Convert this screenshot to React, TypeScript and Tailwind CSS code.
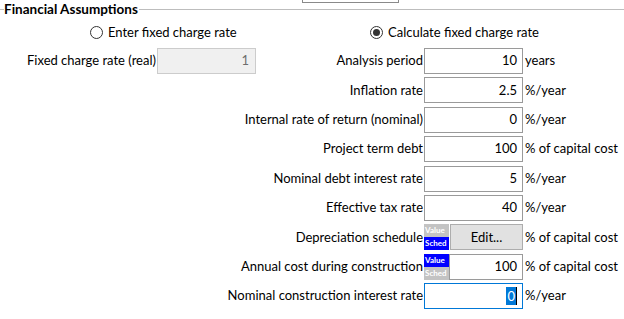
import React from 'react';

type Row = {
  label: string;
  value?: string;
  unit: string;
  kind?: 'input' | 'edit' | 'sched' | 'focus';
};

const ROWS: Row[] = [
  { label: 'Analysis period', value: '10', unit: 'years' },
  { label: 'Inflation rate', value: '2.5', unit: '%/year' },
  { label: 'Internal rate of return (nominal)', value: '0', unit: '%/year' },
  { label: 'Project term debt', value: '100', unit: '% of capital cost' },
  { label: 'Nominal debt interest rate', value: '5', unit: '%/year' },
  { label: 'Effective tax rate', value: '40', unit: '%/year' },
  { label: 'Depreciation schedule', unit: '% of capital cost', kind: 'edit' },
  { label: 'Annual cost during construction', value: '100', unit: '% of capital cost', kind: 'sched' },
  { label: 'Nominal construction interest rate', value: '0', unit: '%/year', kind: 'focus' },
];

const Radio = ({ checked, label }: { checked?: boolean; label: string }) => (
  <div className="flex items-center h-[13px]">
    <span className="w-[13px] h-[13px] rounded-full border border-[#333333] bg-white flex items-center justify-center shrink-0">
      {checked && <span className="w-[7px] h-[7px] rounded-full bg-[#333333]" />}
    </span>
    <span className="ml-[5px] whitespace-nowrap">{label}</span>
  </div>
);

// Value / Sched toggle stack
const ValueSched = ({ sched }: { sched: boolean }) => (
  <div className="w-[25px] h-[26px] flex flex-col shrink-0 text-[8px] font-bold leading-[13px] text-white">
    <span className={`h-[13px] pl-[1px] ${sched ? 'bg-[#c3c3c3]' : 'bg-[#0000ff]'}`}>Value</span>
    <span className={`h-[13px] pl-[1px] ${sched ? 'bg-[#0000ff]' : 'bg-[#c3c3c3]'}`}>Sched</span>
  </div>
);

const Field = ({ row }: { row: Row }) => {
  if (row.kind === 'edit') {
    return (
      <div className="flex w-[99px] h-[26px] shrink-0">
        <ValueSched sched />
        <button className="flex-1 ml-[1px] h-[26px] bg-[#e1e1e1] border border-[#adadad] flex items-center justify-center">
          Edit...
        </button>
      </div>
    );
  }
  if (row.kind === 'sched') {
    return (
      <div className="flex w-[99px] h-[26px] shrink-0">
        <ValueSched sched={false} />
        <div className="flex-1 h-[26px] bg-white border border-[#9a9a9a] flex items-center justify-end pr-[5px]">
          {row.value}
        </div>
      </div>
    );
  }
  if (row.kind === 'focus') {
    return (
      <div className="w-[99px] h-[26px] shrink-0 bg-white border border-[#0078d7] flex items-center justify-end pr-[5px]">
        <span className="bg-[#0078d7] text-white leading-[18px] px-[1px]">{row.value}</span>
        <span className="w-[1px] h-[18px] bg-black" />
      </div>
    );
  }
  return (
    <div className="w-[99px] h-[26px] shrink-0 bg-white border border-[#9a9a9a] flex items-center justify-end pr-[5px]">
      {row.value}
    </div>
  );
};

export default function App() {
  return (
    <div
      className="w-[624px] h-[319px] bg-white overflow-hidden text-[13px] text-black"
      style={{ fontFamily: 'Lato, sans-serif' }}
    >
      {/* bottom of control above */}
      <div className="ml-[302px] w-[97px] h-[3px] border border-t-0 border-[#8a8a8a]" />

      {/* group header */}
      <div className="flex items-center h-[13px]">
        <span className="w-[4px] h-[1px] bg-[#bdbdbd]" />
        <span className="font-bold text-[13.5px] leading-[13px] whitespace-nowrap">Financial Assumptions</span>
        <span className="flex-1 h-[1px] bg-[#bdbdbd] ml-[1px]" />
      </div>

      {/* radios */}
      <div className="flex mt-[10px]">
        <div className="w-[370px] pl-[90px] shrink-0">
          <Radio label="Enter fixed charge rate" />
        </div>
        <Radio checked label="Calculate fixed charge rate" />
      </div>

      {/* rows */}
      <div className="mt-[9px] flex flex-col gap-[3.375px]">
        {ROWS.map((row, i) => (
          <div key={row.label} className="flex items-center h-[26px]">
            <div className="w-[424px] shrink-0 flex items-center">
              {i === 0 && (
                <div className="flex items-center shrink-0">
                  <span className="w-[157px] text-right pr-[1px] whitespace-nowrap">Fixed charge rate (real)</span>
                  <div className="w-[99px] h-[26px] bg-[#f0f0f0] border border-[#cccccc] flex items-center justify-end pr-[6px] text-[#6d6d6d]">
                    1
                  </div>
                </div>
              )}
              <span className="flex-1 text-right pr-[1px] whitespace-nowrap">{row.label}</span>
            </div>
            <Field row={row} />
            <span className="ml-[2px] whitespace-nowrap shrink-0">{row.unit}</span>
          </div>
        ))}
      </div>
    </div>
  );
}
